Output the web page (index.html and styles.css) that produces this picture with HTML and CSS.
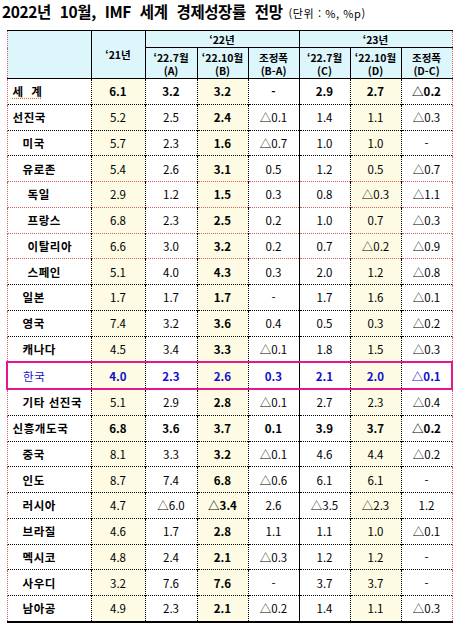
FILE: index.html
```html
<!DOCTYPE html>
<html lang="ko">
<head>
    <meta charset="UTF-8">
    <meta name="viewport" content="width=device-width, initial-scale=1.0">
    <title>2022년 10월 IMF 세계 경제성장률 전망</title>
    <link rel="stylesheet" href="styles.css">
</head>
<body>
    <div class="title">2022년 10월, IMF 세계 경제성장률 전망 <span class="unit">(단위 : %, %p)</span></div>
    <table class="outlook">
        <colgroup>
            <col style="width:84px">
            <col style="width:54px">
            <col style="width:52px">
            <col style="width:51px">
            <col style="width:51px">
            <col style="width:51px">
            <col style="width:51px">
            <col style="width:51px">
        </colgroup>
        <thead>
            <tr class="h1">
                <th rowspan="2" class="edge-l"></th>
                <th rowspan="2">‘21년</th>
                <th colspan="3">‘22년</th>
                <th colspan="3" class="edge-r">‘23년</th>
            </tr>
            <tr class="h2">
                <th>‘22.7월<br>(A)</th>
                <th>‘22.10월<br>(B)</th>
                <th>조정폭<br>(B-A)</th>
                <th>‘22.7월<br>(C)</th>
                <th>‘22.10월<br>(D)</th>
                <th class="edge-r">조정폭<br>(D-C)</th>
            </tr>
        </thead>
        <tbody id="rows"></tbody>
    </table>
    <script>
        var data = [
            ["세 계", "top world", ["6.1","3.2","3.2","-","2.9","2.7","△0.2"]],
            ["선진국", "top", ["5.2","2.5","2.4","△0.1","1.4","1.1","△0.3"]],
            ["미국", "sub", ["5.7","2.3","1.6","△0.7","1.0","1.0","-"]],
            ["유로존", "sub", ["5.4","2.6","3.1","0.5","1.2","0.5","△0.7"]],
            ["독일", "sub2 eu", ["2.9","1.2","1.5","0.3","0.8","△0.3","△1.1"]],
            ["프랑스", "sub2 eu", ["6.8","2.3","2.5","0.2","1.0","0.7","△0.3"]],
            ["이탈리아", "sub2 eu", ["6.6","3.0","3.2","0.2","0.7","△0.2","△0.9"]],
            ["스페인", "sub2 eu", ["5.1","4.0","4.3","0.3","2.0","1.2","△0.8"]],
            ["일본", "sub", ["1.7","1.7","1.7","-","1.7","1.6","△0.1"]],
            ["영국", "sub", ["7.4","3.2","3.6","0.4","0.5","0.3","△0.2"]],
            ["캐나다", "sub", ["4.5","3.4","3.3","△0.1","1.8","1.5","△0.3"]],
            ["한국", "sub korea", ["4.0","2.3","2.6","0.3","2.1","2.0","△0.1"]],
            ["기타 선진국", "sub", ["5.1","2.9","2.8","△0.1","2.7","2.3","△0.4"]],
            ["신흥개도국", "top emerging", ["6.8","3.6","3.7","0.1","3.9","3.7","△0.2"]],
            ["중국", "sub", ["8.1","3.3","3.2","△0.1","4.6","4.4","△0.2"]],
            ["인도", "sub", ["8.7","7.4","6.8","△0.6","6.1","6.1","-"]],
            ["러시아", "sub", ["4.7","△6.0","△3.4","2.6","△3.5","△2.3","1.2"]],
            ["브라질", "sub", ["4.6","1.7","2.8","1.1","1.1","1.0","△0.1"]],
            ["멕시코", "sub", ["4.8","2.4","2.1","△0.3","1.2","1.2","-"]],
            ["사우디", "sub", ["3.2","7.6","7.6","-","3.7","3.7","-"]],
            ["남아공", "sub last", ["4.9","2.3","2.1","△0.2","1.4","1.1","△0.3"]]
        ];
        var colClass = ["y", "", "y b", "", "gsep", "y", "edge-r"];
        var html = "";
        data.forEach(function(row){
            html += '<tr class="' + row[1] + '">';
            var label = row[0] === "세 계" ? '<span class="squiggle">세&nbsp;&nbsp;계</span>' : row[0];
            html += '<td class="name edge-l">' + label + '</td>';
            row[2].forEach(function(v, i){
                html += '<td class="' + colClass[i] + '">' + v + '</td>';
            });
            html += '</tr>';
        });
        document.getElementById("rows").innerHTML = html;
    </script>
</body>
</html>
```

FILE: styles.css
```css
body{
    margin: 0;
    font-family: "Noto Sans CJK KR", "Noto Sans", sans-serif;
    color: #000;
    background: #fff;
}
.title{
    height: 24px;
    line-height: 22px;
    padding-left: 2px;
    margin-bottom: 6px;
    font-size: 15.5px;
    font-weight: bold;
    word-spacing: 5px;
    letter-spacing: -0.4px;
    white-space: nowrap;
}
.unit{
    font-size: 11px;
    font-weight: normal;
    word-spacing: 0;
    letter-spacing: 0.6px;
    margin-left: -3px;
}
.outlook{
    margin-left: 6px;
    width: 446px;
    table-layout: fixed;
    border-collapse: collapse;
}
.outlook th{
    background: #dcf6fb;
    border: 1px solid #000;
    font-size: 10.5px;
    line-height: 13px;
    font-weight: 600;
    padding: 0;
    text-align: center;
}
.h1 th{
    height: 16px;
}
.h2 th{
    height: 29px;
    padding-top: 1px;
}
.outlook td{
    height: 24.75px;
    padding: 0;
    text-align: center;
    font-size: 11.5px;
    border-top: 1px dotted #000;
    border-left: 1px dotted #000;
}
.outlook .edge-l{
    border-left: 1px dotted #d06060;
}
.outlook .edge-r{
    border-right: 1px dotted #d06060;
}
.outlook td.gsep{
    border-left: 1px solid #000;
}
.outlook td.y{
    background: #fdfbe3;
}
.outlook td.b{
    font-weight: bold;
}
.name{
    text-align: left !important;
    font-weight: 600;
    letter-spacing: 0.6px;
    white-space: nowrap;
}
.top .name{
    padding-left: 5px;
}
.sub .name{
    padding-left: 15px;
}
.sub2 .name{
    padding-left: 20px;
}
.outlook tr.eu td{
    border-top-color: #d06060;
}
.world td,
.emerging td{
    font-weight: bold;
}
.squiggle{
    text-decoration: underline dotted #d07a10;
    text-underline-offset: 2px;
}
.outlook tr.korea td{
    color: #1010c8;
    font-weight: bold;
    border-top: 2px solid #e2188c;
    border-bottom: 2px solid #e2188c;
}
.outlook tr.korea td.name{
    font-weight: normal;
    border-left: 2px solid #e2188c;
}
.outlook tr.korea td.edge-r{
    border-right: 2px solid #e2188c;
}
.outlook tr.last td{
    border-bottom: 2px solid #000;
}
```
